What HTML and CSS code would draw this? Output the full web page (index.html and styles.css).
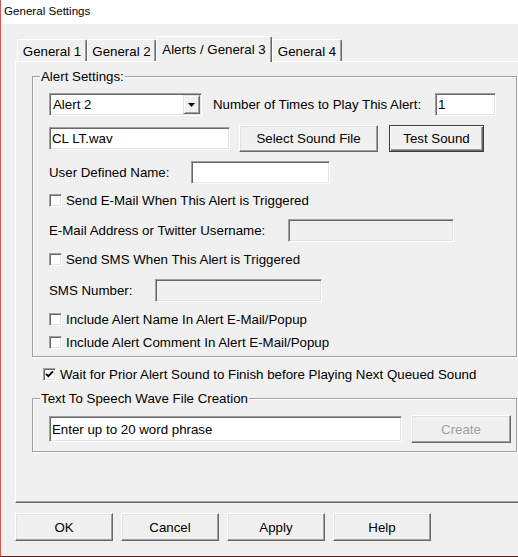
FILE: index.html
```html
<!DOCTYPE html>
<html>
<head>
<meta charset="utf-8">
<title>General Settings</title>
<link rel="stylesheet" href="styles.css">
</head>
<body>
<div class="window">
  <div class="titlebar">General Settings</div>
  <div class="client">
    <div class="tabs">
      <div class="tab tab-1">General 1</div>
      <div class="tab tab-2">General 2</div>
      <div class="tab tab-active">Alerts / General 3</div>
      <div class="tab tab-4">General 4</div>
    </div>
    <div class="panel">
      <div class="group group-alert">
        <div class="legend">Alert Settings:</div>
        <div class="row row-1">
          <div class="select">
            <span class="select-text">Alert 2</span>
            <span class="drop-btn"><svg width="7" height="4" viewBox="0 0 7 4"><polygon points="0,0 7,0 3.5,4" fill="#000"/></svg></span>
          </div>
          <span class="label label-times">Number of Times to Play This Alert:</span>
          <div class="field field-times">1</div>
        </div>
        <div class="row row-2">
          <div class="field field-wav">CL LT.wav</div>
          <button class="btn btn-select">Select Sound File</button>
          <button class="btn btn-default btn-test">Test Sound</button>
        </div>
        <div class="row row-3">
          <span class="label label-user">User Defined Name:</span>
          <div class="field field-user"></div>
        </div>
        <div class="row check-row row-4">
          <span class="check"></span>
          <span class="label">Send E-Mail When This Alert is Triggered</span>
        </div>
        <div class="row row-5">
          <span class="label label-email">E-Mail Address or Twitter Username:</span>
          <div class="field field-disabled field-email"></div>
        </div>
        <div class="row check-row row-6">
          <span class="check"></span>
          <span class="label">Send SMS When This Alert is Triggered</span>
        </div>
        <div class="row row-7">
          <span class="label label-sms">SMS Number:</span>
          <div class="field field-disabled field-sms"></div>
        </div>
        <div class="row check-row row-8">
          <span class="check"></span>
          <span class="label">Include Alert Name In Alert E-Mail/Popup</span>
        </div>
        <div class="row check-row row-9">
          <span class="check"></span>
          <span class="label">Include Alert Comment In Alert E-Mail/Popup</span>
        </div>
      </div>
      <div class="row check-row row-wait">
        <span class="check"><svg width="9" height="9" viewBox="0 0 9 9"><polyline points="1,3.8 3.3,6.2 8,1.4" fill="none" stroke="#000" stroke-width="1.9"/></svg></span>
        <span class="label">Wait for Prior Alert Sound to Finish before Playing Next Queued Sound</span>
      </div>
      <div class="group group-tts">
        <div class="legend">Text To Speech Wave File Creation</div>
        <div class="row row-tts">
          <div class="field field-phrase">Enter up to 20 word phrase</div>
          <button class="btn btn-create" disabled>Create</button>
        </div>
      </div>
    </div>
    <div class="buttons">
      <button class="btn btn-dialog">OK</button>
      <button class="btn btn-dialog">Cancel</button>
      <button class="btn btn-dialog">Apply</button>
      <button class="btn btn-dialog">Help</button>
    </div>
  </div>
</div>
</body>
</html>
```
FILE: styles.css
```css
html, body {
  margin: 0;
  padding: 0;
  background: #f0f0f0;
}
body {
  font-family: "Liberation Sans", Arial, sans-serif;
  font-size: 13.3px;
  color: #000;
}
.window {
  width: 518px;
  height: 557px;
  box-sizing: border-box;
  border-left: 1px solid #d4574f;
  border-bottom: 1px solid #5e1f1f;
  background: #f0f0f0;
  overflow: hidden;
}
.titlebar {
  height: 24px;
  background: #fff;
  padding-left: 3px;
  font-size: 11.6px;
  line-height: 22px;
}
.client {
  padding-left: 14px;
}

/* tabs */
.tabs {
  display: flex;
  align-items: flex-end;
  height: 25px;
  margin-top: 12px;
  padding-left: 2px;
}
.tab {
  box-sizing: border-box;
  height: 22px;
  line-height: 15px;
  padding-top: 4px;
  text-align: center;
  white-space: nowrap;
  border-top: 1px solid #fff;
  border-left: 1px solid #fff;
  border-right: 1px solid #696969;
  box-shadow: inset -1px 0 0 #a0a0a0;
  border-radius: 2px 2px 0 0;
  background: #f0f0f0;
}
.tab-1 { width: 70px; }
.tab-2 { width: 69px; }
.tab-4 { width: 70px; }
.tab-active {
  width: 116px;
  height: 26px;
  padding-top: 5px;
  margin-bottom: -1px;
  position: relative;
  z-index: 1;
}

/* panel */
.panel {
  box-sizing: border-box;
  width: 506px;
  height: 442px;
  border-top: 1px solid #fff;
  border-left: 1px solid #fff;
  border-bottom: 1px solid #696969;
  box-shadow: inset 0 -1px 0 #a0a0a0;
  padding-left: 16px;
}

/* group boxes */
.group {
  box-sizing: border-box;
  width: 485px;
  border: 1px solid #a0a0a0;
  box-shadow: 1px 1px 0 #fff, inset 1px 1px 0 #fff;
  padding: 0 0 0 16px;
}
.group-alert {
  margin-top: 14px;
  padding-bottom: 4px;
}
.group-tts {
  margin-top: 14px;
  padding-bottom: 8px;
}
.legend {
  width: max-content;
  height: 15px;
  line-height: 15px;
  margin: -8px 0 0 -9px;
  padding: 0 1px;
  background: #f0f0f0;
  white-space: nowrap;
}

/* rows */
.row {
  display: flex;
  align-items: center;
  height: 23px;
}
.check-row { height: 20px; }
.row-1 { margin-top: 9px; }
.row-2 { margin-top: 9px; height: 27px; }
.row-3 { margin-top: 9px; }
.row-4 { margin-top: 6px; }
.row-5 { margin-top: 9px; }
.row-6 { margin-top: 7px; }
.row-7 { margin-top: 10px; }
.row-8 { margin-top: 7px; }
.row-9 { margin-top: 3px; }
.row-wait { margin-top: 7px; margin-left: 11px; }
.row-tts { margin-top: 9px; height: 28px; }

.label {
  white-space: nowrap;
  line-height: 15px;
}
.label-times { width: 222px; margin-left: 11px; }
.label-user { width: 142px; }
.label-email { width: 239px; }
.label-sms { width: 106px; }

/* sunken fields */
.field, .select, .check {
  box-sizing: border-box;
  border: 1px solid;
  border-color: #a0a0a0 #fff #fff #a0a0a0;
  box-shadow: inset 1px 1px 0 #696969, inset -1px -1px 0 #e3e3e3;
  background: #fff;
}
.field {
  height: 23px;
  padding-left: 2px;
  display: flex;
  align-items: center;
  white-space: nowrap;
}
.field-disabled { background: #f0f0f0; }
.field-times { width: 61px; }
.field-wav { width: 181px; }
.field-user { width: 139px; }
.field-email { width: 166px; }
.field-sms { width: 167px; }
.field-phrase { width: 353px; height: 26px; }

.select {
  width: 153px;
  height: 23px;
  display: flex;
  align-items: center;
  padding: 1px;
}
.select-text {
  flex: 1;
  padding-left: 2px;
}
.drop-btn {
  box-sizing: border-box;
  width: 17px;
  height: 19px;
  display: flex;
  align-items: center;
  justify-content: center;
  background: #f0f0f0;
  border: 1px solid;
  border-color: #e3e3e3 #696969 #696969 #e3e3e3;
  box-shadow: inset 1px 1px 0 #fff, inset -1px -1px 0 #a0a0a0;
}

.check {
  width: 13px;
  height: 13px;
  margin-right: 4px;
  display: flex;
  align-items: center;
  justify-content: center;
  flex: none;
}

/* buttons */
.btn {
  box-sizing: border-box;
  height: 27px;
  padding: 0;
  margin: 0;
  font: inherit;
  color: #000;
  background: #f0f0f0;
  border: 1px solid;
  border-color: #fff #696969 #696969 #fff;
  box-shadow: inset -1px -1px 0 #a0a0a0, inset 1px 1px 0 #e3e3e3;
  text-align: center;
}
.btn-default {
  border: 1px solid #3c3c3c;
  box-shadow: inset 1px 1px 0 #fff, inset -1px -1px 0 #696969, inset -2px -2px 0 #a0a0a0;
}
.btn-select { width: 139px; margin-left: 9px; }
.btn-test { width: 95px; margin-left: 11px; }
.btn-create {
  width: 100px;
  height: 28px;
  margin-left: 9px;
  color: #a0a0a0;
}

.buttons {
  display: flex;
  gap: 8px;
  margin-top: 10px;
}
.btn-dialog {
  width: 98px;
  height: 28px;
}
```
